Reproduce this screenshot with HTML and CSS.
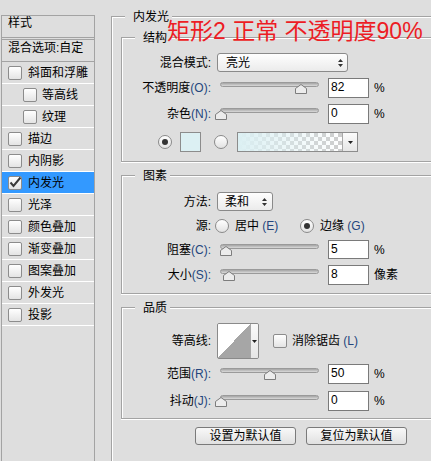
FILE: index.html
```html
<!DOCTYPE html>
<html lang="zh-CN">
<head>
<meta charset="utf-8">
<title>图层样式 - 内发光</title>
<link rel="stylesheet" href="styles.css">
</head>
<body>
<div class="page">
  <aside class="styles">
    <div class="styles-head">样式</div>
    <div class="styles-blend">混合选项:自定</div>
    <ul class="style-list">
      <li class="item"><span class="cb"></span>斜面和浮雕</li>
      <li class="item sub"><span class="cb"></span>等高线</li>
      <li class="item sub"><span class="cb"></span>纹理</li>
      <li class="item"><span class="cb"></span>描边</li>
      <li class="item"><span class="cb"></span>内阴影</li>
      <li class="item selected"><span class="cb"><svg class="check" width="14" height="14" viewBox="0 0 14 14"><path d="M2.5 6.5 L5.5 10 L12.5 1.5" fill="none" stroke="#3a3a3a" stroke-width="2"/></svg></span>内发光</li>
      <li class="item"><span class="cb"></span>光泽</li>
      <li class="item"><span class="cb"></span>颜色叠加</li>
      <li class="item"><span class="cb"></span>渐变叠加</li>
      <li class="item"><span class="cb"></span>图案叠加</li>
      <li class="item"><span class="cb"></span>外发光</li>
      <li class="item"><span class="cb"></span>投影</li>
    </ul>
  </aside>

  <main class="outer">
    <div class="gtitle">内发光</div>

    <section class="group g-struct">
      <div class="gtitle">结构</div>
      <div class="row h19 mt7">
        <span class="lbl">混合模式:</span>
        <div class="select blend"><span>亮光</span><svg width="5" height="8" viewBox="0 0 5 8"><path d="M2.5 0 L5 3 H0 Z M0 5 H5 L2.5 8 Z" fill="#333"/></svg></div>
      </div>
      <div class="row mt6">
        <span class="lbl">不透明度<span class="key">(O):</span></span>
        <div class="slider"><div class="track"><svg class="thumb" style="left:82%" width="12" height="10" viewBox="0 0 12 10"><path d="M0.5 9.5 V4.5 L6 0.5 L11.5 4.5 V9.5 Z" fill="#ececec" stroke="#7d7d7d"/></svg></div></div>
        <div class="num">82</div><span class="unit">%</span>
      </div>
      <div class="row mt6">
        <span class="lbl">杂色<span class="key">(N):</span></span>
        <div class="slider"><div class="track"><svg class="thumb" style="left:0%" width="12" height="10" viewBox="0 0 12 10"><path d="M0.5 9.5 V4.5 L6 0.5 L11.5 4.5 V9.5 Z" fill="#ececec" stroke="#7d7d7d"/></svg></div></div>
        <div class="num">0</div><span class="unit">%</span>
      </div>
      <div class="row colors mt8">
        <span class="radio on"></span>
        <span class="swatch"></span>
        <span class="radio r2"></span>
        <div class="gradbox"><div class="gradfill"></div><div class="graddrop"><svg width="5" height="3" viewBox="0 0 5 3"><path d="M0 0 H5 L2.5 3 Z" fill="#222"/></svg></div></div>
      </div>
    </section>

    <section class="group g-elem">
      <div class="gtitle">图素</div>
      <div class="row h19 mt8">
        <span class="lbl">方法:</span>
        <div class="select method"><span>柔和</span><svg width="5" height="8" viewBox="0 0 5 8"><path d="M2.5 0 L5 3 H0 Z M0 5 H5 L2.5 8 Z" fill="#333"/></svg></div>
      </div>
      <div class="row h19 mt5">
        <span class="lbl">源:</span>
        <label class="opt first"><span class="radio"></span><span class="opt-text">居中 <span class="key">(E)</span></span></label>
        <label class="opt"><span class="radio on"></span><span class="opt-text">边缘 <span class="key">(G)</span></span></label>
      </div>
      <div class="row h19 mt5">
        <span class="lbl">阻塞<span class="key">(C):</span></span>
        <div class="slider"><div class="track"><svg class="thumb" style="left:5%" width="12" height="10" viewBox="0 0 12 10"><path d="M0.5 9.5 V4.5 L6 0.5 L11.5 4.5 V9.5 Z" fill="#ececec" stroke="#7d7d7d"/></svg></div></div>
        <div class="num">5</div><span class="unit">%</span>
      </div>
      <div class="row mt6">
        <span class="lbl">大小<span class="key">(S):</span></span>
        <div class="slider"><div class="track"><svg class="thumb" style="left:8.5%" width="12" height="10" viewBox="0 0 12 10"><path d="M0.5 9.5 V4.5 L6 0.5 L11.5 4.5 V9.5 Z" fill="#ececec" stroke="#7d7d7d"/></svg></div></div>
        <div class="num">8</div><span class="unit">像素</span>
      </div>
    </section>

    <section class="group g-qual">
      <div class="gtitle">品质</div>
      <div class="row contour-row mt7">
        <span class="lbl">等高线:</span>
        <div class="contour"><div class="cprev"></div><div class="cdrop"><svg width="5" height="3" viewBox="0 0 5 3"><path d="M0 0 H5 L2.5 3 Z" fill="#222"/></svg></div></div>
        <span class="cb aa"></span><span>消除锯齿 <span class="key">(L)</span></span>
      </div>
      <div class="row mt5">
        <span class="lbl">范围<span class="key">(R):</span></span>
        <div class="slider"><div class="track"><svg class="thumb" style="left:50%" width="12" height="10" viewBox="0 0 12 10"><path d="M0.5 9.5 V4.5 L6 0.5 L11.5 4.5 V9.5 Z" fill="#ececec" stroke="#7d7d7d"/></svg></div></div>
        <div class="num">50</div><span class="unit">%</span>
      </div>
      <div class="row mt7">
        <span class="lbl">抖动<span class="key">(J):</span></span>
        <div class="slider"><div class="track"><svg class="thumb" style="left:0%" width="12" height="10" viewBox="0 0 12 10"><path d="M0.5 9.5 V4.5 L6 0.5 L11.5 4.5 V9.5 Z" fill="#ececec" stroke="#7d7d7d"/></svg></div></div>
        <div class="num">0</div><span class="unit">%</span>
      </div>
    </section>

    <div class="buttons">
      <button class="btn">设置为默认值</button>
      <button class="btn">复位为默认值</button>
    </div>
  </main>
</div>
<div class="annot">矩形2 正常 不透明度90%</div>
</body>
</html>
```

FILE: styles.css
```css
html, body { margin: 0; padding: 0; }
body {
  position: relative;
  width: 431px;
  height: 461px;
  overflow: hidden;
  background: #dedede;
  color: #000;
  font: 12px/16px "Liberation Sans", "Noto Sans CJK SC", sans-serif;
}
.page { display: flex; align-items: flex-start; height: 461px; overflow: hidden; }

/* left style list */
.styles {
  box-sizing: border-box;
  flex: none;
  width: 94px;
  height: 446px;
  margin: 15px 0 0 1px;
  border: 1px solid #a3a3a3;
  border-bottom: none;
}
.styles-head {
  height: 21px;
  line-height: 15px;
  padding-left: 6px;
  border-bottom: 1px solid #a3a3a3;
  margin-bottom: 1px;
}
.styles-blend {
  height: 21px;
  line-height: 16px;
  padding-left: 6px;
  border-top: 1px solid #a3a3a3;
  border-bottom: 1px solid #a3a3a3;
  white-space: nowrap;
}
.style-list { list-style: none; margin: 0; padding: 0; }
.item {
  display: flex;
  align-items: center;
  height: 21px;
  padding-left: 6px;
  border-bottom: 1px solid #fff;
  white-space: nowrap;
}
.item.sub { padding-left: 21px; }
.item.sub .cb { margin-right: 5px; }
.item.selected { background: #3399ff; }
.cb {
  box-sizing: border-box;
  flex: none;
  width: 14px;
  height: 14px;
  margin-right: 6px;
  border: 1px solid #8c8c8c;
  border-radius: 2px;
  background: linear-gradient(#ffffff, #e4e4e4);
  position: relative;
}
.check { position: absolute; left: -1px; top: -1px; }

/* group boxes */
.outer {
  box-sizing: border-box;
  flex: none;
  width: 320px;
  height: 445px;
  margin: 16px 0 0 16px;
  border-top: 1px solid #a3a3a3;
  border-left: 1px solid #a3a3a3;
  box-shadow: inset 1px 1px 0 #fff;
}
.gtitle {
  width: max-content;
  margin: -8px 0 0 13px;
  padding: 0 3px 0 8px;
  line-height: 16px;
  background: #dedede;
}
.group {
  width: 310px;
  margin: 12px 0 0 9px;
  border: 1px solid #a3a3a3;
  border-right: none;
  box-shadow: inset 1px 1px 0 #fff, 0 1px 0 #fff;
}
.g-struct { padding-bottom: 9px; }
.g-elem { margin-top: 13px; padding-bottom: 8px; }
.g-qual { margin-top: 13px; padding-bottom: 7px; }

/* rows */
.row { display: flex; align-items: center; height: 20px; white-space: nowrap; }
.row.h19 { height: 19px; }
.mt5 { margin-top: 5px; }
.mt6 { margin-top: 6px; }
.mt7 { margin-top: 7px; }
.mt8 { margin-top: 8px; }
.lbl { flex: none; width: 89px; text-align: right; }
.key { color: #24467d; }

.select {
  box-sizing: border-box;
  flex: none;
  height: 19px;
  margin-left: 6px;
  padding: 0 4px 0 8px;
  border: 1px solid #8a8a8a;
  border-radius: 3px;
  background: linear-gradient(#fefefe, #ebebeb);
  display: flex;
  align-items: center;
  justify-content: space-between;
}
.select.blend { width: 131px; }
.select.method { width: 56px; padding-left: 7px; padding-right: 5px; }

.slider { flex: none; width: 106px; height: 100%; margin-left: 6px; }
.track {
  box-sizing: border-box;
  position: relative;
  width: 99px;
  height: 5px;
  margin: 4px 0 0 3px;
  border: 1px solid #9a9a9a;
  border-radius: 3px;
  background: linear-gradient(#a4a4a4, #dadada);
}
.thumb { position: absolute; top: 1px; transform: translateX(-50%); }

.num {
  box-sizing: border-box;
  flex: none;
  width: 41px;
  height: 100%;
  margin-left: 5px;
  padding-left: 2px;
  border: 1px solid #7a7a7a;
  background: #fff;
  line-height: 17px;
}
.unit { margin-left: 5px; }

.colors { padding-left: 36px; }
.radio {
  box-sizing: border-box;
  flex: none;
  width: 14px;
  height: 14px;
  border: 1px solid #8a8a8a;
  border-radius: 50%;
  background: linear-gradient(#ffffff, #e2e2e2);
  display: flex;
  align-items: center;
  justify-content: center;
}
.radio.on::after {
  content: "";
  width: 6px;
  height: 6px;
  border-radius: 50%;
  background: #333;
}
.swatch {
  box-sizing: border-box;
  flex: none;
  width: 21px;
  height: 20px;
  margin-left: 8px;
  border: 1px solid #8c8c8c;
  background: #dcf0f3;
}
.radio.r2 { margin-left: 13px; }
.gradbox {
  box-sizing: border-box;
  flex: none;
  display: flex;
  width: 121px;
  height: 20px;
  margin-left: 9px;
  border: 1px solid #8c8c8c;
}
.gradfill {
  flex: 1;
  background:
    linear-gradient(to right, #dcf0f3, rgba(220, 240, 243, 0)),
    repeating-conic-gradient(#cdcdcd 0 25%, #ffffff 0 50%) 0 0 / 8px 8px;
}
.graddrop {
  width: 14px;
  border-left: 1px solid #a8a8a8;
  background: linear-gradient(#fcfcfc, #e6e6e6);
  display: flex;
  align-items: center;
  justify-content: center;
}

.opt { display: flex; align-items: center; flex: none; }
.opt.first { width: 85px; margin-left: 4px; }
.opt-text { margin-left: 6px; }

.contour-row { height: 36px; }
.contour {
  box-sizing: border-box;
  flex: none;
  display: flex;
  width: 42px;
  height: 36px;
  margin-left: 6px;
  border: 1px solid #8a8a8a;
  border-radius: 2px;
  overflow: hidden;
}
.cprev { flex: 1; background: linear-gradient(to top left, #a6a6a6 50%, #ffffff 50%); }
.cdrop {
  width: 7px;
  border-left: 1px solid #a8a8a8;
  background: linear-gradient(#fafafa, #e6e6e6);
  display: flex;
  align-items: center;
  justify-content: center;
}
.cb.aa { margin-left: 14px; margin-right: 5px; }

.buttons { display: flex; gap: 10px; margin: 8px 0 0 83px; }
.btn {
  box-sizing: border-box;
  width: 101px;
  height: 18px;
  padding: 0;
  border: 1px solid #7a7a7a;
  border-radius: 3px;
  background: linear-gradient(#f8f8f8, #e0e0e0);
  color: #000;
  font: inherit;
  line-height: 16px;
  text-align: center;
}

/* red annotation laid over the dialog */
.annot {
  position: absolute;
  top: 20px;
  left: 167px;
  color: #ed1c24;
  font-size: 23px;
  line-height: 23px;
  white-space: nowrap;
}
```
